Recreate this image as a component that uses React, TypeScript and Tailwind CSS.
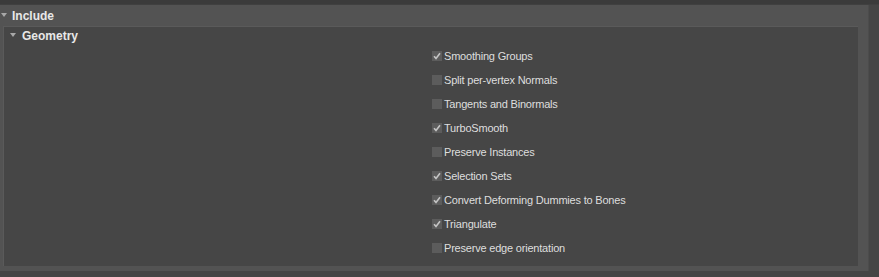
const items: [string, boolean][] = [
  ["Smoothing Groups", true],
  ["Split per-vertex Normals", false],
  ["Tangents and Binormals", false],
  ["TurboSmooth", true],
  ["Preserve Instances", false],
  ["Selection Sets", true],
  ["Convert Deforming Dummies to Bones", true],
  ["Triangulate", true],
  ["Preserve edge orientation", false],
];

function Caret() {
  return (
    <svg width="6" height="5" viewBox="0 0 6 5" className="shrink-0">
      <path d="M0 0 L6 0 L3 4 Z" fill="#a8a8a8" />
    </svg>
  );
}

function Check({ on }: { on: boolean }) {
  return (
    <div className="w-[10px] h-[10px] bg-[#5c5c5c] flex items-center justify-center">
      {on && (
        <svg width="8" height="8" viewBox="0 0 8 8">
          <path d="M1 4.2 L3 6.4 L7 1.2" stroke="#c4c4c4" strokeWidth="1.6" fill="none" />
        </svg>
      )}
    </div>
  );
}

export default function App() {
  return (
    <div
      className="w-[879px] h-[277px] bg-[#454545] flex flex-col overflow-hidden"
      style={{ fontFamily: '"Liberation Sans", Arial, sans-serif' }}
    >
      <div className="h-[5px] bg-[#3b3b3b] border-b border-[#404040]" />
      <div className="flex">
        <div className="w-[869px] bg-[#535353] flex flex-col pb-[5px] border-r border-[#4c4c4c]">
          <div className="h-[21px] flex items-center gap-[5px] pl-[1px]">
            <Caret />
            <span className="text-[12px] font-bold text-[#e8e8e8]">Include</span>
          </div>
          <div className="ml-[3px] mr-[10px] h-[240px] bg-[#464646] border-t border-l border-[#5a5a5a]">
            <div className="h-[17px] flex items-center gap-[6px] pl-[6px]">
              <Caret />
              <span className="text-[12px] font-bold text-[#e8e8e8]">Geometry</span>
            </div>
            <div className="flex flex-col pl-[428px]">
              {items.map(([label, on]) => (
                <div key={label} className="h-[24px] flex items-center gap-[2px]">
                  <Check on={on} />
                  <span className="text-[11px] tracking-[-0.2px] text-[#dedede]">{label}</span>
                </div>
              ))}
            </div>
          </div>
        </div>
      </div>
    </div>
  );
}
